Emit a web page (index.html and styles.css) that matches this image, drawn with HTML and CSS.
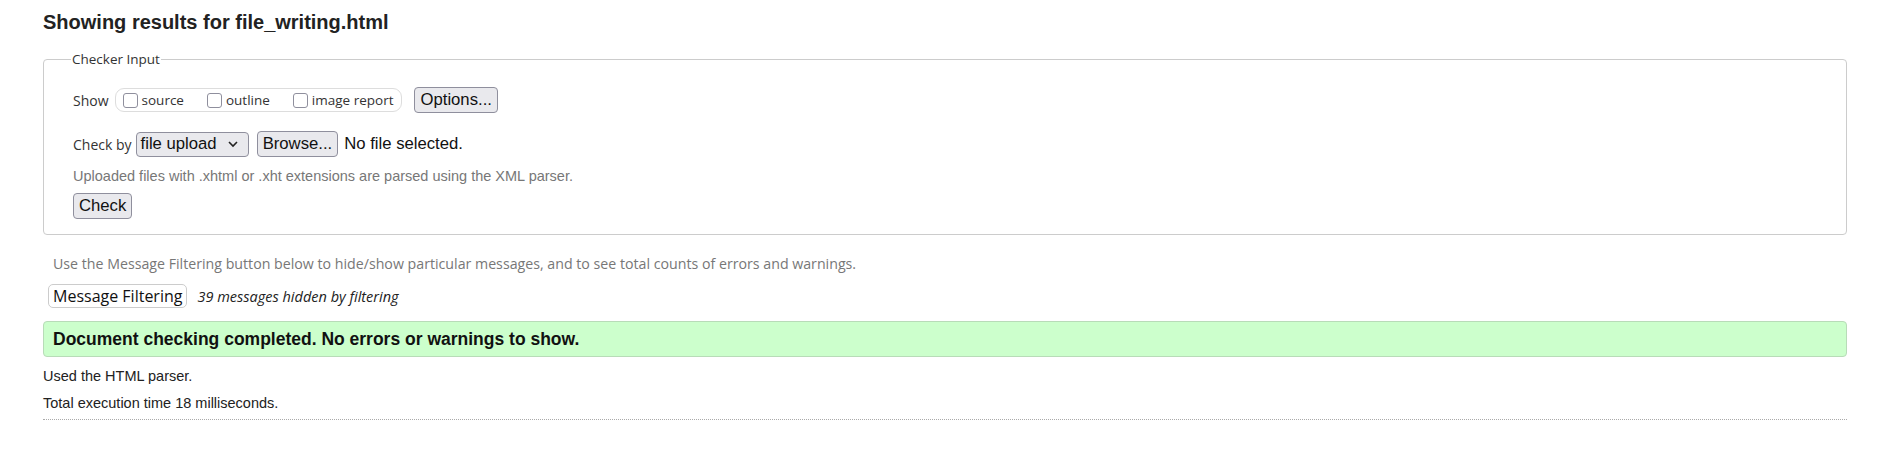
FILE: index.html
```html
<!DOCTYPE html>
<html lang="en">
<head>
<meta charset="utf-8">
<title>Showing results for file_writing.html</title>
<link rel="stylesheet" href="styles.css">
</head>
<body>
<main class="page">
  <h2 class="title">Showing results for file_writing.html</h2>
  <fieldset class="checker">
    <legend class="legend">Checker Input</legend>
    <div class="row show-row">
      <span class="lbl">Show</span>
      <span class="opts">
        <label class="opt"><input class="cb" type="checkbox"> source</label>
        <label class="opt"><input class="cb" type="checkbox"> outline</label>
        <label class="opt"><input class="cb" type="checkbox"> image report</label>
      </span>
      <button class="btn">Options...</button>
    </div>
    <div class="row by-row">
      <span class="lbl">Check by</span>
      <span class="select">file upload
        <svg class="chev" width="12" height="8" viewBox="0 0 12 8"><path d="M2 2 L6 6 L10 2" fill="none" stroke="#222" stroke-width="1.6"/></svg>
      </span>
      <span class="file"><button class="btn">Browse...</button><span class="nofile">No file selected.</span></span>
    </div>
    <p class="note">Uploaded files with .xhtml or .xht extensions are parsed using the XML parser.</p>
    <button class="btn check">Check</button>
  </fieldset>
  <p class="hint">Use the Message Filtering button below to hide/show particular messages, and to see total counts of errors and warnings.</p>
  <div class="filter-row">
    <button class="filter-btn">Message Filtering</button>
    <em class="hidden-count">39 messages hidden by filtering</em>
  </div>
  <p class="success">Document checking completed. No errors or warnings to show.</p>
  <p class="meta">Used the HTML parser.</p>
  <p class="meta last">Total execution time 18 milliseconds.</p>
  <hr class="rule">
</main>
</body>
</html>
```

FILE: styles.css
```css
html, body {
  margin: 0;
  padding: 0;
  background: #fff;
}
body {
  font-family: "Liberation Sans", Arial, sans-serif;
  color: #222;
}
.page {
  padding: 10px 37px 30px 43px;
}
.title {
  margin: 0 0 15px;
  font-size: 20px;
  line-height: 24px;
  font-weight: bold;
  color: #222;
}
.checker {
  margin: 0;
  border: 1px solid #ccc;
  border-radius: 4px;
  padding: 18px 29px 15px 29px;
}
.legend {
  font-family: "Open Sans", "Noto Sans", sans-serif;
  font-size: 13.5px;
  line-height: 20px;
  padding: 0 1px;
  margin-left: -2px;
  color: #333;
}
.row {
  display: flex;
  align-items: center;
  font-family: "Open Sans", "Noto Sans", sans-serif;
  font-size: 14px;
  color: #333;
}
.show-row {
  height: 26px;
}
.by-row {
  height: 26px;
  margin-top: 18px;
}
.lbl {
  margin-right: 4px;
}
.show-row .lbl {
  margin-right: 6px;
}
.opts {
  display: flex;
  align-items: center;
  height: 22px;
  border: 1px solid #ddd;
  border-radius: 9px;
  padding: 0 8px 0 7px;
  gap: 23px;
  margin-right: 12px;
}
.opt {
  display: flex;
  align-items: center;
  font-size: 13.5px;
  color: #333;
}
.cb {
  appearance: none;
  -webkit-appearance: none;
  width: 15px;
  height: 15px;
  margin: 0 4px 0 0;
  border: 1px solid #8f8f9d;
  border-radius: 3px;
  background: #fff;
}
.btn {
  font-family: "Liberation Sans", Arial, sans-serif;
  font-size: 16.7px;
  line-height: 20px;
  color: #111;
  background: #e9e9ed;
  border: 1px solid #8f8f9d;
  border-radius: 4px;
  padding: 2px 5px;
  margin: 0;
}
.select {
  display: inline-flex;
  align-items: center;
  gap: 10px;
  height: 25px;
  box-sizing: border-box;
  font-family: "Liberation Sans", Arial, sans-serif;
  font-size: 16.7px;
  color: #111;
  background: #e9e9ed;
  border: 1px solid #8f8f9d;
  border-radius: 4px;
  padding: 0 9px 0 4px;
  margin-right: 8px;
}
.file {
  display: inline-flex;
  align-items: center;
}
.nofile {
  margin-left: 6px;
  font-family: "Liberation Sans", Arial, sans-serif;
  font-size: 16.7px;
  color: #111;
}
.note {
  margin: 10px 0 8px;
  font-size: 14.5px;
  line-height: 18px;
  color: #777;
}
.check {
  display: block;
}
.hint {
  margin: 20px 0 11px 10px;
  font-family: "Open Sans", "Noto Sans", sans-serif;
  font-size: 14.2px;
  line-height: 18px;
  color: #777;
}
.filter-row {
  display: flex;
  align-items: center;
  gap: 10px;
  margin-left: 5px;
}
.filter-btn {
  font-family: "Open Sans", "Noto Sans", sans-serif;
  font-size: 16px;
  line-height: 20px;
  color: #111;
  background: #fff;
  border: 1px solid #ccc;
  border-radius: 5px;
  padding: 1px 4px;
  margin: 0;
}
.hidden-count {
  font-family: "Open Sans", "Noto Sans", sans-serif;
  font-size: 14.5px;
  color: #222;
}
.success {
  margin: 13px 0 10px;
  padding: 7px 9px;
  background: #ccffcc;
  border: 1px solid #b8dcb8;
  border-radius: 4px;
  font-size: 17.5px;
  line-height: 20px;
  font-weight: bold;
  color: #111;
}
.meta {
  margin: 0 0 9px;
  font-size: 14.5px;
  line-height: 18px;
  color: #222;
}
.meta.last {
  margin-bottom: 0;
}
.rule {
  margin: 7px 0 0;
  border: 0;
  border-top: 1px dotted #aaa;
  height: 0;
}
```
